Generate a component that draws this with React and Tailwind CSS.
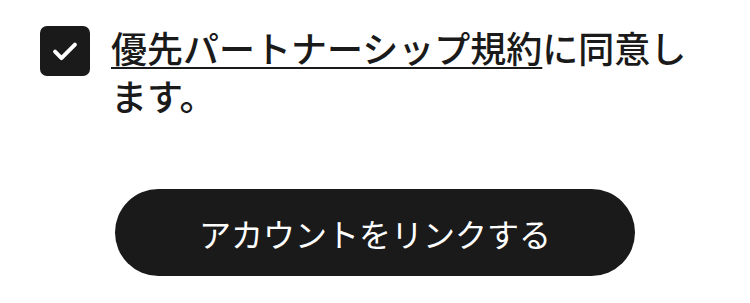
import React, { useState } from 'react';

function App() {
    const [agreed, setAgreed] = useState(true);

    return (
        <div className="w-[750px] h-[303px] bg-white" style={{ fontFamily: '"Noto Sans CJK JP", "Noto Sans", sans-serif' }}>
            {/* Agreement */}
            <div className="flex items-start pl-[40px] pt-[26px]">
                <button
                    onClick={() => setAgreed(!agreed)}
                    className="w-[50px] h-[50px] shrink-0 rounded-[7px] bg-[#1a1a1a] flex items-center justify-center"
                >
                    {agreed && (
                        <svg className="w-[34px] h-[34px] text-white" fill="none" stroke="currentColor" viewBox="0 0 24 24">
                            <path strokeLinecap="round" strokeLinejoin="round" strokeWidth={2.8} d="M5 12.5l4.5 4.5L19 7.5" />
                        </svg>
                    )}
                </button>
                <p className="ml-[21px] w-[600px] text-[36px] leading-[48px] text-[#1a1a1a] font-medium -mt-[3px]">
                    <a href="#" className="underline decoration-2 underline-offset-[4px]">優先パートナーシップ規約</a>に同意します。
                </p>
            </div>

            {/* Button */}
            <div className="flex justify-center mt-[70px]">
                <button className="w-[520px] h-[87px] rounded-full bg-[#1a1a1a] text-white text-[32px]">
                    アカウントをリンクする
                </button>
            </div>
        </div>
    )
}

export default App
